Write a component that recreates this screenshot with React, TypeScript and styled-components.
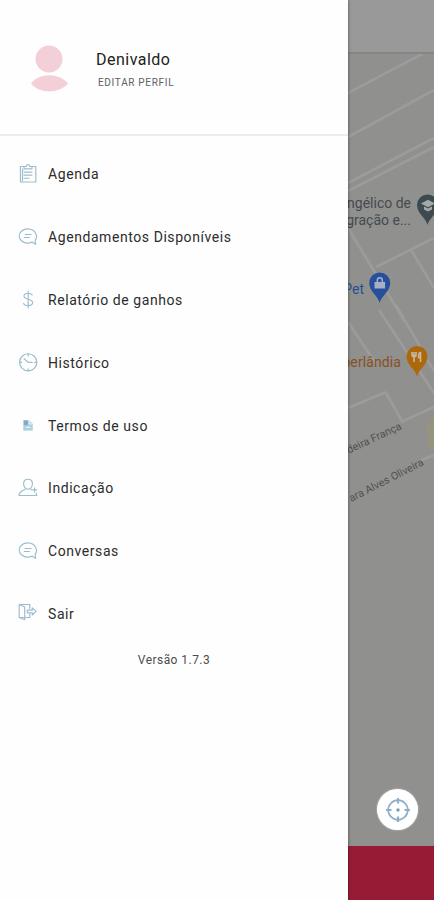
import React from "react";
import styled, { createGlobalStyle } from "styled-components";

const GlobalStyle = createGlobalStyle`
  * { box-sizing: border-box; }
  body { margin: 0; background: #fff; font-family: Roboto, "Liberation Sans", sans-serif; }
`;

const Screen = styled.div`
  display: flex;
  width: 434px;
  height: 900px;
  overflow: hidden;
`;

const Drawer = styled.nav`
  flex: 0 0 348px;
  display: flex;
  flex-direction: column;
  background: #fefefe;
  z-index: 1;
  box-shadow: 0 0 3px rgba(0, 0, 0, 0.5);
`;

const Profile = styled.header`
  display: flex;
  align-items: flex-start;
  height: 136px;
  padding: 45px 0 0 30px;
  border-bottom: 2px solid #ececec;
`;

const ProfileText = styled.div`
  display: flex;
  flex-direction: column;
  padding: 5px 0 0 27px;
`;

const Name = styled.div`
  font-size: 16px;
  line-height: 20px;
  letter-spacing: 0.48px;
  color: #222;
`;

const EditLink = styled.div`
  padding: 7px 0 0 2px;
  font-size: 10px;
  line-height: 12px;
  letter-spacing: 0.68px;
  color: #606060;
`;

const Menu = styled.ul`
  list-style: none;
  margin: 0;
  padding: 7px 0 0 18px;
`;

const MenuItem = styled.li`
  display: flex;
  align-items: center;
  gap: 10px;
  height: 62.8px;
`;

const MenuLabel = styled.span`
  font-size: 14px;
  letter-spacing: 0.57px;
  color: #2c2c2c;
`;

const Version = styled.div`
  margin-top: 8px;
  font-size: 12px;
  line-height: 14px;
  letter-spacing: 0.45px;
  text-align: center;
  color: #4c4c4c;
`;

const Backdrop = styled.main`
  flex: 1;
  display: flex;
  flex-direction: column;
  min-width: 0;
`;

const TopBar = styled.div`
  height: 54px;
  background: #999;
  border-bottom: 2px solid #858585;
`;

const MapArea = styled.div`
  position: relative;
  height: 792px;
  overflow: hidden;
  background: #90918f;
`;

const BottomBar = styled.div`
  flex: 1;
  background: #971b35;
`;

const PlaceLabel = styled.div<{ $top: number; $right: number; $color: string; $spacing?: number }>`
  position: absolute;
  top: ${(p) => p.$top}px;
  right: ${(p) => p.$right}px;
  font-size: 14px;
  line-height: 17px;
  letter-spacing: ${(p) => p.$spacing ?? 0}px;
  text-align: right;
  white-space: nowrap;
  color: ${(p) => p.$color};
`;

const StreetLabel = styled.div<{ $top: number; $right: number; $angle: number }>`
  position: absolute;
  top: ${(p) => p.$top}px;
  right: ${(p) => p.$right}px;
  font-size: 10.8px;
  line-height: 12px;
  white-space: nowrap;
  color: #50524f;
  transform: rotate(${(p) => p.$angle}deg);
  transform-origin: right center;
`;

const LocateButton = styled.button`
  position: absolute;
  left: 29px;
  top: 735px;
  width: 41px;
  height: 41px;
  padding: 0;
  display: grid;
  place-items: center;
  border: 0;
  border-radius: 50%;
  background: #fff;
  box-shadow: 0 0 2px rgba(255, 255, 255, 0.6);
`;

const LineIcon = styled.svg`
  flex: none;
  width: 20px;
  height: 20px;
  display: block;
  fill: none;
  stroke: #9dbccd;
  stroke-width: 1.15;
  stroke-linecap: round;
  stroke-linejoin: round;
`;

const MapDrawing = styled.svg`
  display: block;
`;

const ClipboardIcon = () => (
  <LineIcon viewBox="0 0 20 20">
    <path d="M6 2.500H2.400v15.500h15.400V2.500H14" />
    <path d="M6 4.800V2.500h2.300c0-2.500 3.400-2.500 3.400 0H14v2.300zM6 8.100h8M6 11.100h8M6 14.200h5M4.500 17V5" />
  </LineIcon>
);

const ChatIcon = () => (
  <LineIcon viewBox="0 0 20 20">
    <path d="M17.200 13c1.400-1.400 1.700-3.400 1-5.300C17 4.200 13.500 1.900 9.700 1.900c-4.700 0-8.500 3.200-8.500 7.100s3.800 7.100 8.500 7.100c1.700 0 3.200-.3 4.500-1.100l3.300 2.400z" />
    <path d="M7.200 7.500h6M6.300 10.500h5.200" />
  </LineIcon>
);

const DollarIcon = () => (
  <LineIcon viewBox="0 0 20 20">
    <path d="M14.200 5c-.8-1.200-2.200-1.800-4.100-1.800-2.500 0-4.100 1.100-4.100 2.800 0 4.200 8.600 2.400 8.600 6.600 0 1.900-1.800 3.100-4.400 3.100-2.100 0-3.700-.7-4.700-2.100M10.200 1v17" />
  </LineIcon>
);

const ClockIcon = () => (
  <LineIcon viewBox="0 0 20 20">
    <circle cx="10.200" cy="9.300" r="8.600" />
    <path d="M6.200 5.800l4 3.600h4M10.200 0.900v2M10.200 15.700v2M1.700 9.300h2M16.700 9.300h2" />
  </LineIcon>
);

const DocumentIcon = () => (
  <LineIcon viewBox="0 0 20 20">
    <path d="M5.800 4.500h5l3.600 3.300v6.400H5.800z" fill="#a9d3e2" stroke="#a9cbdc" strokeWidth=".6" />
    <path d="M5.800 4.500h4.300v4.600H5.800z" fill="#8fa3c5" stroke="none" />
    <path d="M8.500 11.400h3.500M11 4.800v3h3" stroke="#e2f2f6" />
  </LineIcon>
);

const PersonIcon = () => (
  <LineIcon viewBox="0 0 20 20">
    <path d="M10 1.200c2.700 0 4.400 1.800 4.400 4.400 0 3-1.800 5.600-4.400 5.600S5.600 8.600 5.600 5.600c0-2.600 1.700-4.400 4.400-4.400z" />
    <path d="M7.300 10.800c-.3 2-5.800 1.200-6.300 6.700h17.800c0-1-.2-1.800-.7-2.500M12.600 10.800l1 1.200M16.600 9.900v4M14.600 11.900h4" />
  </LineIcon>
);

const ExitIcon = () => (
  <LineIcon viewBox="0 0 20 20">
    <path d="M6.700 13.500H1.200V0.500h10.600v4M11.800 10v3.500H7M1.200 0.500l5.500 2.500v12.700l-5.500-2.200" />
    <path d="M9.300 6.100h5V3.900l3.700 3.500-3.700 3.600V8.800h-5z" />
  </LineIcon>
);

const items = [
  { label: "Agenda", icon: <ClipboardIcon /> },
  { label: "Agendamentos Disponíveis", icon: <ChatIcon /> },
  { label: "Relatório de ganhos", icon: <DollarIcon /> },
  { label: "Histórico", icon: <ClockIcon /> },
  { label: "Termos de uso", icon: <DocumentIcon /> },
  { label: "Indicação", icon: <PersonIcon /> },
  { label: "Conversas", icon: <ChatIcon /> },
  { label: "Sair", icon: <ExitIcon /> },
];

const Avatar = () => (
  <svg width="39" height="48" viewBox="0 0 39 48">
    <circle cx="19" cy="14" r="13.500" fill="#f3cfd7" />
    <path d="M1 38.500C9 27.500 29 27.500 38 38.500 29 49 9 49 1 38.500z" fill="#f3cfd7" />
  </svg>
);

const PinShape = ({ x, y, color }: { x: number; y: number; color: string }) => (
  <path
    transform={`translate(${x} ${y})`}
    fill={color}
    d="M0 20C-1.500 13-10.500 8.500-10.500 0a10.500 10.500 0 0 1 21 0C10.500 8.500 1.500 13 0 20z"
  />
);

const CityMap = () => (
  <MapDrawing width="86" height="792" viewBox="348 54 86 792">
    <path d="M434 417l-8 9 3 22 5 2z" fill="#96947d" />
    <g fill="none" stroke="#9b9c9b" strokeWidth="2.600">
      <path d="M348 93l74-39M348 137l86-47M348 183l86-45M348 191l86-44" />
      <path d="M348 228l57 94M376 267l58-29M411 250l23 38" />
      <path d="M348 322l28 42M386 393l16 28M379 310l55 83M396 305l38 66M348 408l38-16M401 422l33-15M420 461l14-6" />
    </g>
    <PinShape x={427.500} y={205} color="#3d4a50" />
    <path d="M421 203.500l7-3.700 7 3.700-7 3.700zM424 206.500v3l4 2 4-2v-3l-4 2z" fill="#a4a9aa" />
    <PinShape x={379.700} y={283} color="#274f9c" />
    <path d="M374.500 282h10.600v6.500h-10.600z" fill="#a5b0c4" />
    <path d="M377.300 282v-1.600c0-3.400 5-3.400 5 0v1.600" fill="none" stroke="#a5b0c4" strokeWidth="1.500" />
    <PinShape x={417} y={356.500} color="#ad680c" />
    <path d="M412 352v3c0 2 4 2 4 0v-3M414 352v10M420.500 362v-9.500c-1.800 0-2 2-2 5h2" fill="none" stroke="#c6b8a3" strokeWidth="1.600" />
  </MapDrawing>
);

const TargetIcon = () => (
  <svg width="26" height="26" viewBox="0 0 26 26" fill="none" stroke="#8fb0c8">
    <circle cx="13" cy="13" r="9.800" strokeWidth="1.700" />
    <path d="M13 1v5.500M13 19.500v5.500M1 13h5.500M19.500 13h5.500" strokeWidth="2.200" />
    <circle cx="13" cy="13" r="1.700" fill="#6e9fbe" stroke="none" />
  </svg>
);

export default function App() {
  return (
    <>
      <GlobalStyle />
      <Screen>
        <Drawer>
          <Profile>
            <Avatar />
            <ProfileText>
              <Name>Denivaldo</Name>
              <EditLink>EDITAR PERFIL</EditLink>
            </ProfileText>
          </Profile>
          <Menu>
            {items.map((item) => (
              <MenuItem key={item.label}>
                {item.icon}
                <MenuLabel>{item.label}</MenuLabel>
              </MenuItem>
            ))}
          </Menu>
          <Version>Versão 1.7.3</Version>
        </Drawer>
        <Backdrop>
          <TopBar />
          <MapArea>
            <CityMap />
            <PlaceLabel $top={141} $right={23} $color="#454a4d">
              ngélico de
              <br />
              gração e...
            </PlaceLabel>
            <PlaceLabel $top={227} $right={70} $color="#294f91">Pet</PlaceLabel>
            <PlaceLabel $top={300} $right={33} $color="#87501f" $spacing={0.1}>berlândia</PlaceLabel>
            <StreetLabel $top={366} $right={33} $angle={-25}>deira França</StreetLabel>
            <StreetLabel $top={402} $right={11} $angle={-27}>ara Alves Oliveira</StreetLabel>
            <LocateButton aria-label="Localizar">
              <TargetIcon />
            </LocateButton>
          </MapArea>
          <BottomBar />
        </Backdrop>
      </Screen>
    </>
  );
}
